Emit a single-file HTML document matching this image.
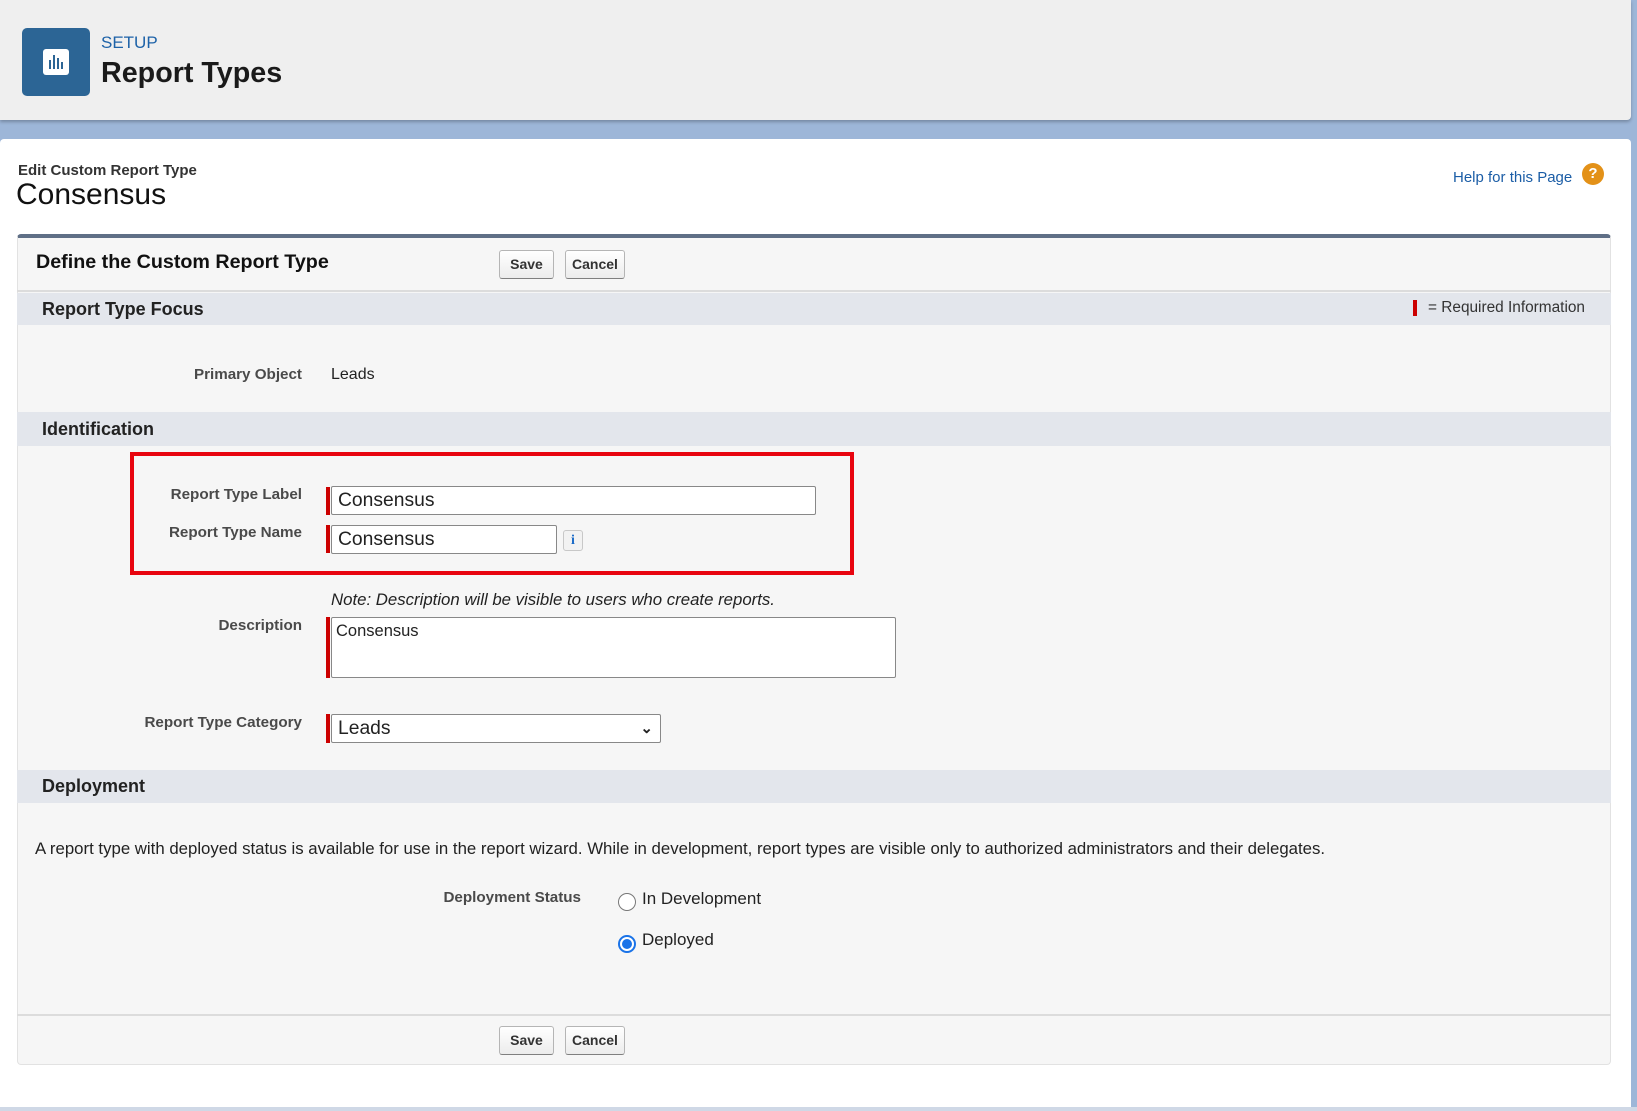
<!DOCTYPE html>
<html><head><meta charset="utf-8"><style>
*{box-sizing:border-box;margin:0;padding:0}
body{width:1637px;height:1111px;position:relative;overflow:hidden;background:#9db6d8;font-family:"Liberation Sans",Arial,sans-serif;color:#222}
.a{position:absolute;white-space:nowrap}
.lbl{position:absolute;font-weight:bold;font-size:15.2px;color:#4a4a4a;text-align:right;white-space:nowrap}
.band{position:absolute;left:17px;width:1594px;background:#e3e6ec;font-weight:bold;font-size:18px;padding-left:25px}
.btn{position:absolute;height:29px;border:1px solid #b5b5b5;border-bottom-color:#7f7f7f;border-radius:3px;background:linear-gradient(#fff,#ececec);font-weight:bold;font-size:14px;color:#333;text-align:center;line-height:27px}
.req{position:absolute;width:4px;background:#c00}
.inp{position:absolute;border:1px solid #888;border-radius:2px;background:#fff;font-size:19.3px;padding-left:6px}
</style></head><body>
<div class="a" style="left:0;top:0;width:1631px;height:120px;background:#efefef;box-shadow:0 2px 3px rgba(0,0,0,.25);border-radius:0 0 4px 0"></div>
<div class="a" style="left:22px;top:28px;width:68px;height:68px;background:#2c6595;border-radius:5px"></div>
<div class="a" style="left:43px;top:49px;width:26px;height:26px;background:#fff;border-radius:3px"></div>
<div class="a" style="left:49px;top:60px;width:2px;height:9px;background:#2c6595"></div>
<div class="a" style="left:53px;top:55px;width:2px;height:14px;background:#2c6595"></div>
<div class="a" style="left:57px;top:58px;width:2px;height:11px;background:#2c6595"></div>
<div class="a" style="left:61px;top:62px;width:2px;height:7px;background:#2c6595"></div>
<div class="a" style="left:101px;top:33px;font-size:17px;color:#1d62a8">SETUP</div>
<div class="a" style="left:101px;top:57px;font-size:28.7px;font-weight:bold;color:#1a1a1a">Report Types</div>

<div class="a" style="left:0;top:139px;width:1631px;height:972px;background:#fff;border-radius:4px 4px 0 0"></div>
<div class="a" style="left:18px;top:162px;font-size:15px;font-weight:bold;color:#333">Edit Custom Report Type</div>
<div class="a" style="left:16px;top:178px;font-size:30px;color:#111">Consensus</div>
<div class="a" style="left:1453px;top:169px;font-size:15px;color:#1b5da6">Help for this Page</div>
<div class="a" style="left:1582px;top:163px;width:22px;height:22px;border-radius:50%;background:#e39118;color:#fff;font-weight:bold;font-size:15px;text-align:center;line-height:22px">?</div>

<div class="a" style="left:17px;top:234px;width:1594px;height:831px;background:#f6f6f6;border:1px solid #e2e2e2;border-top:4px solid #5f6f86;border-radius:4px"></div>
<div class="a" style="left:36px;top:251px;font-size:19.7px;font-weight:bold;color:#111">Define the Custom Report Type</div>
<div class="btn" style="left:499px;top:250px;width:55px">Save</div>
<div class="btn" style="left:565px;top:250px;width:60px">Cancel</div>
<div class="a" style="left:17px;top:290px;width:1594px;height:2px;background:#dcdcdc"></div>

<div class="band" style="top:293px;height:32px;line-height:32px">Report Type Focus</div>
<div class="req" style="left:1413px;top:300px;height:16px"></div>
<div class="a" style="left:1428px;top:299px;font-size:15.4px;color:#333">= Required Information</div>
<div class="lbl" style="right:1335px;top:366px">Primary Object</div>
<div class="a" style="left:331px;top:366px;font-size:16px">Leads</div>

<div class="band" style="top:412px;height:34px;line-height:34px">Identification</div>
<div class="a" style="left:130px;top:452px;width:724px;height:123px;border:4px solid #e8050f"></div>
<div class="lbl" style="right:1335px;top:486px">Report Type Label</div>
<div class="req" style="left:326px;top:487px;height:28px"></div>
<div class="inp" style="left:331px;top:486px;width:485px;height:29px;line-height:27px">Consensus</div>
<div class="lbl" style="right:1335px;top:524px">Report Type Name</div>
<div class="req" style="left:326px;top:525px;height:28px"></div>
<div class="inp" style="left:331px;top:525px;width:226px;height:29px;line-height:27px">Consensus</div>
<div class="a" style="left:563px;top:530px;width:20px;height:21px;border:1px solid #c8c8c8;border-radius:3px;background:#f2f2f2;color:#1c6cc8;font-family:'Liberation Serif',serif;font-weight:bold;font-size:14px;text-align:center;line-height:19px">i</div>

<div class="a" style="left:331px;top:590px;font-size:16.8px;font-style:italic;color:#222">Note: Description will be visible to users who create reports.</div>
<div class="lbl" style="right:1335px;top:617px">Description</div>
<div class="req" style="left:326px;top:617px;height:61px"></div>
<div class="inp" style="left:331px;top:617px;width:565px;height:61px;font-size:16.5px;padding:4px 4px">Consensus</div>
<div class="lbl" style="right:1335px;top:714px">Report Type Category</div>
<div class="req" style="left:326px;top:714px;height:29px"></div>
<div class="inp" style="left:331px;top:714px;width:330px;height:29px;line-height:27px">Leads<span style="position:absolute;right:7px;top:0;font-size:15px;font-weight:bold">&#8964;</span></div>

<div class="band" style="top:770px;height:33px;line-height:33px">Deployment</div>
<div class="a" style="left:35px;top:839px;font-size:16.8px;color:#222">A report type with deployed status is available for use in the report wizard. While in development, report types are visible only to authorized administrators and their delegates.</div>
<div class="lbl" style="right:1056px;top:889px">Deployment Status</div>
<div class="a" style="left:618px;top:893px;width:18px;height:18px;border:1px solid #777;border-radius:50%;background:#fff"></div>
<div class="a" style="left:642px;top:889px;font-size:17px">In Development</div>
<div class="a" style="left:618px;top:935px;width:18px;height:18px;border:2px solid #1a73e8;border-radius:50%;background:#fff"></div>
<div class="a" style="left:622px;top:939px;width:10px;height:10px;border-radius:50%;background:#1a73e8"></div>
<div class="a" style="left:642px;top:930px;font-size:17px">Deployed</div>

<div class="a" style="left:17px;top:1014px;width:1594px;height:2px;background:#dcdcdc"></div>
<div class="btn" style="left:499px;top:1026px;width:55px">Save</div>
<div class="btn" style="left:565px;top:1026px;width:60px">Cancel</div>
<div class="a" style="left:0;top:1107px;width:1637px;height:4px;background:#cfd8e6"></div>
</body></html>
